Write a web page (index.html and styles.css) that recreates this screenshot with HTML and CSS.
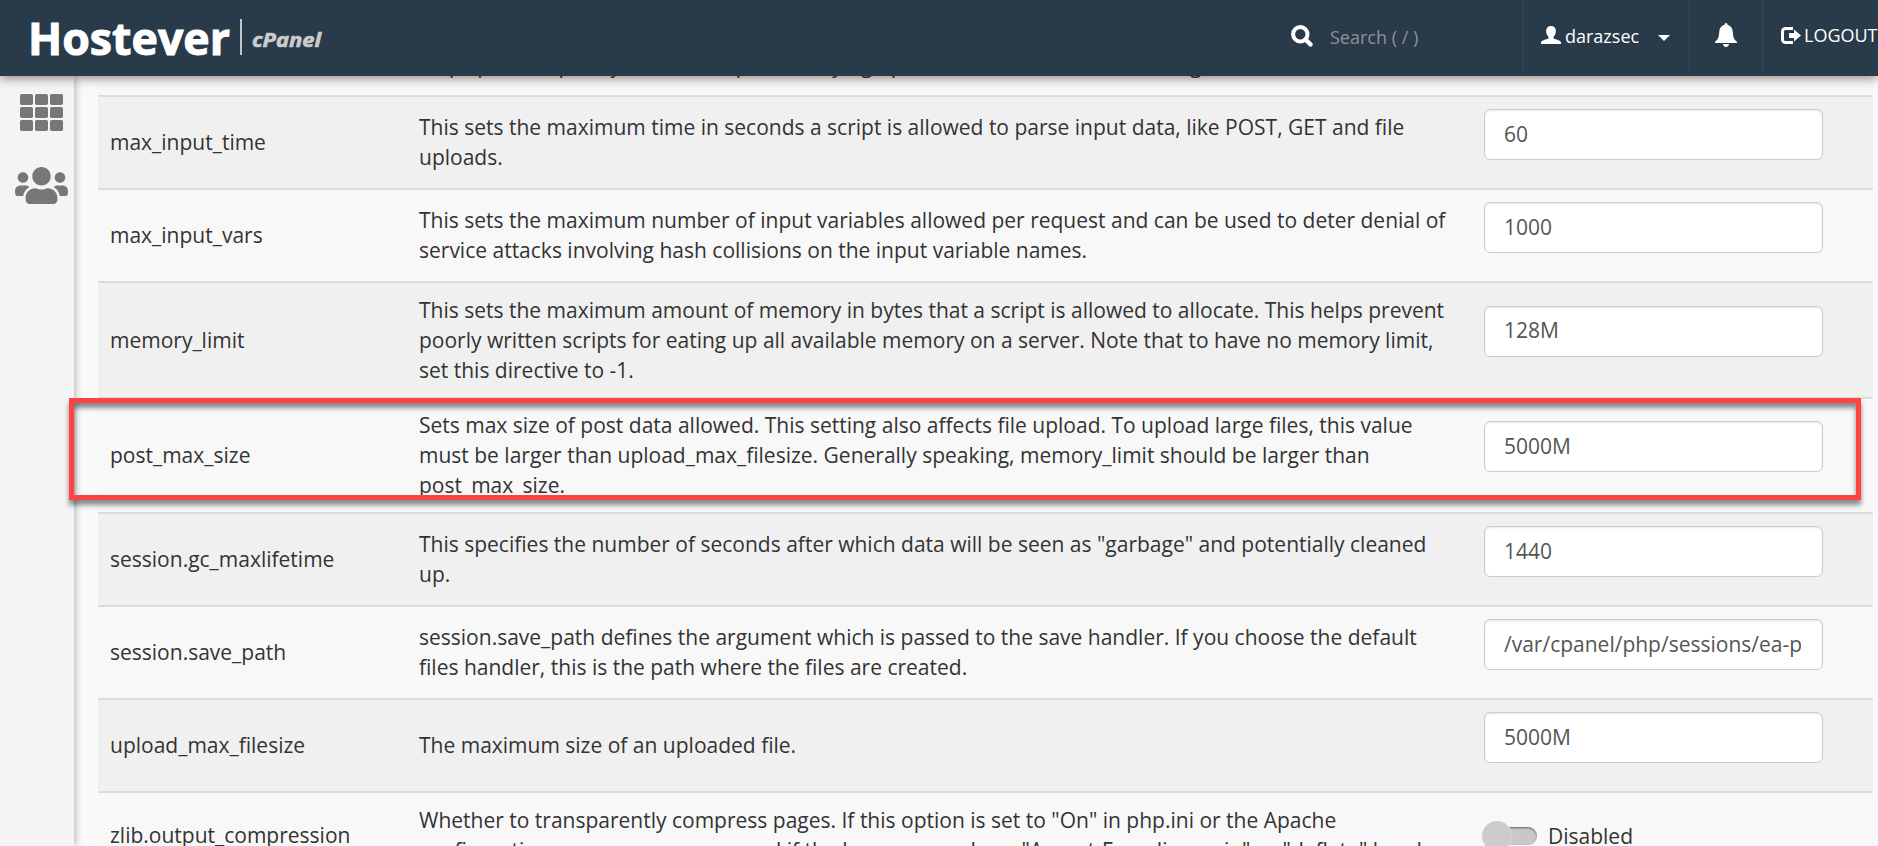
FILE: index.html
```
<!DOCTYPE html>
<html lang="en">

<head>
    <meta charset="UTF-8" />
    <title>cPanel - MultiPHP INI Editor</title>
    <link rel="stylesheet" href="styles.css">
</head>

<body>

    <header class="navbar">
        <div class="brand">
            <svg class="logo" width="210" height="50" viewBox="0 0 210 50">
                <text class="logo-name" x="-2" y="43" textLength="202" lengthAdjust="spacingAndGlyphs">Hostever</text>
            </svg>
            <span class="logo-divider"></span>
            <svg class="logo-sub" width="76" height="32" viewBox="0 0 76 32">
                <text class="logo-cpanel" x="0" y="22" textLength="69" lengthAdjust="spacingAndGlyphs">cPanel</text>
            </svg>
        </div>
        <div class="search">
            <svg width="22" height="22" viewBox="0 0 22 22">
                <circle cx="9.300" cy="9.300" r="7.200" fill="none" stroke="#fff" stroke-width="4" />
                <path d="M14.500 14.500l5 5" stroke="#fff" stroke-width="4.400" stroke-linecap="round" />
            </svg>
            <span>Search ( / )</span>
        </div>
        <div class="nav-item user">
            <svg width="20" height="18" viewBox="0 0 20 18">
                <path fill="#fff" d="M10 0c3.2 0 4.9 2.1 4.9 5 0 2.600-1 4.400-2.300 5.600v1.900c2.500 1.100 6.400 1.700 7.400 3.500V18H0v-2c1-1.800 4.900-2.400 7.400-3.500v-1.900C6.100 9.400 5.100 7.600 5.100 5 5.100 2.100 6.800 0 10 0z" />
            </svg>
            <span>darazsec</span>
            <i class="caret"></i>
        </div>
        <div class="nav-item bell">
            <svg width="22" height="24" viewBox="0 0 22 24">
                <path fill="#fff" d="M11 0c.9 0 1.500.7 1.500 1.800 3.300.8 5 3.400 5.300 7.200.3 5.500 1.200 7.500 4.200 9.800V20H0v-1.200C3 16.500 3.900 14.500 4.200 9c.3-3.800 2-6.400 5.300-7.200C9.500.7 10.100 0 11 0zM8 21h6c-.3 1.800-1.400 3-3 3s-2.700-1.200-3-3z" />
            </svg>
        </div>
        <div class="nav-item logout">
            <svg width="20" height="17" viewBox="0 0 20 17">
                <path d="M12 1.500H4.500a3 3 0 0 0-3 3v8a3 3 0 0 0 3 3H12" fill="none" stroke="#fff" stroke-width="3" />
                <path fill="#fff" d="M8 6h5V2.500l7 6-7 6V11H8z" />
            </svg>
            <span>LOGOUT</span>
        </div>
    </header>

    <div class="layout">
        <nav class="sidebar">
            <svg width="43" height="37" viewBox="0 0 43 37" fill="#777">
                <rect width="13" height="11" rx="1.800" /><rect x="15" width="13" height="11" rx="1.800" /><rect x="30" width="13" height="11" rx="1.800" />
                <rect y="13" width="13" height="11" rx="1.800" /><rect x="15" y="13" width="13" height="11" rx="1.800" /><rect x="30" y="13" width="13" height="11" rx="1.800" />
                <rect y="26" width="13" height="11" rx="1.800" /><rect x="15" y="26" width="13" height="11" rx="1.800" /><rect x="30" y="26" width="13" height="11" rx="1.800" />
            </svg>
            <svg width="53" height="37" viewBox="0 0 640 448" fill="#777">
                <path d="M96 192c35.300 0 64-28.700 64-64s-28.700-64-64-64-64 28.700-64 64 28.700 64 64 64zm448 0c35.300 0 64-28.700 64-64s-28.700-64-64-64-64 28.700-64 64 28.700 64 64 64zm32 32h-64c-17.600 0-33.500 7.100-45.100 18.600 40.300 22.100 68.900 62 75.100 109.400h66c17.700 0 32-14.300 32-32v-32c0-35.300-28.700-64-64-64zm-256 0c61.900 0 112-50.100 112-112S381.900 0 320 0 208 50.100 208 112s50.100 112 112 112zm76.800 32h-8.300c-20.800 10-43.900 16-68.500 16s-47.600-6-68.500-16h-8.300C179.600 256 128 307.600 128 371.200V400c0 26.500 21.500 48 48 48h288c26.500 0 48-21.500 48-48v-28.800c0-63.600-51.600-115.200-115.200-115.200zm-223.700-13.400C161.500 231.100 145.600 224 128 224H64c-35.300 0-64 28.700-64 64v32c0 17.700 14.300 32 32 32h65.900c6.300-47.400 34.900-87.300 75.200-109.400z" />
            </svg>
        </nav>

        <main class="content">
            <div class="directives">
                <div class="row row-first">
                    <div class="name"></div>
                    <div class="info">helps prevent poorly written scripts from tying up the server. The default setting is 30.</div>
                    <div class="value"></div>
                </div>
                <div class="row odd">
                    <div class="name">max_input_time</div>
                    <div class="info">This sets the maximum time in seconds a script is allowed to parse input data, like POST, GET and file<br>uploads.</div>
                    <div class="value"><input type="text" value="60" /></div>
                </div>
                <div class="row">
                    <div class="name">max_input_vars</div>
                    <div class="info">This sets the maximum number of input variables allowed per request and can be used to deter denial of<br>service attacks involving hash collisions on the input variable names.</div>
                    <div class="value"><input type="text" value="1000" /></div>
                </div>
                <div class="row odd tall">
                    <div class="name">memory_limit</div>
                    <div class="info">This sets the maximum amount of memory in bytes that a script is allowed to allocate. This helps prevent<br>poorly written scripts for eating up all available memory on a server. Note that to have no memory limit,<br>set this directive to -1.</div>
                    <div class="value"><input type="text" value="128M" /></div>
                </div>
                <div class="row tall">
                    <div class="name">post_max_size</div>
                    <div class="info">Sets max size of post data allowed. This setting also affects file upload. To upload large files, this value<br>must be larger than upload_max_filesize. Generally speaking, memory_limit should be larger than<br>post_max_size.</div>
                    <div class="value"><input type="text" value="5000M" /></div>
                </div>
                <div class="row odd">
                    <div class="name">session.gc_maxlifetime</div>
                    <div class="info">This specifies the number of seconds after which data will be seen as "garbage" and potentially cleaned<br>up.</div>
                    <div class="value"><input type="text" value="1440" /></div>
                </div>
                <div class="row">
                    <div class="name">session.save_path</div>
                    <div class="info">session.save_path defines the argument which is passed to the save handler. If you choose the default<br>files handler, this is the path where the files are created.</div>
                    <div class="value"><input type="text" value="/var/cpanel/php/sessions/ea-php74" /></div>
                </div>
                <div class="row odd">
                    <div class="name">upload_max_filesize</div>
                    <div class="info">The maximum size of an uploaded file.</div>
                    <div class="value"><input type="text" value="5000M" /></div>
                </div>
                <div class="row row-last">
                    <div class="name">zlib.output_compression</div>
                    <div class="info">Whether to transparently compress pages. If this option is set to "On" in php.ini or the Apache<br>configuration, pages are compressed if the browser sends an "Accept-Encoding: gzip" or "deflate" header.</div>
                    <div class="value toggle"><span class="switch"></span><span>Disabled</span></div>
                </div>
            </div>
        </main>
    </div>

    <div class="highlight"></div>

</body>

</html>
```

FILE: styles.css
```
* {
    box-sizing: border-box;
}

body {
    margin: 0;
    height: 846px;
    overflow: hidden;
    display: flex;
    flex-direction: column;
    background: #fafafa;
    color: #333;
    font-family: "Open Sans", sans-serif;
    font-size: 21px;
    line-height: 30px;
}

/* top bar */
.navbar {
    position: relative;
    z-index: 2;
    flex: none;
    display: flex;
    height: 76px;
    background: #293a4a;
    box-shadow: 0 2px 10px rgba(40, 10, 10, 0.5);
    color: #fff;
}

.brand {
    display: flex;
    width: 1291px;
    padding-left: 30px;
}

.logo {
    margin-top: 12px;
    overflow: visible;
}

.logo-name {
    fill: #fff;
    stroke: #fff;
    stroke-width: 1px;
    font: 700 45px "Open Sans", sans-serif;
}

.logo-divider {
    width: 2px;
    height: 36px;
    margin: 19px 10px 0 0;
    background: #c0c5ca;
}

.logo-sub {
    margin-top: 25px;
    overflow: visible;
}

.logo-cpanel {
    fill: #ccc;
    stroke: #ccc;
    stroke-width: 0.6px;
    font: italic 700 19px "Open Sans", sans-serif;
}

.search {
    display: flex;
    gap: 17px;
    width: 232px;
    padding-top: 22px;
    color: #8f9194;
    font-size: 18px;
}

.search svg {
    margin-top: 3px;
}

.nav-item {
    display: flex;
    height: 74px;
    border-left: 1px solid #33475a;
    font-size: 18px;
    white-space: nowrap;
}

.user {
    width: 166px;
    padding: 21px 0 0 17px;
}

.user svg {
    margin: 5px 4px 0 0;
}

.caret {
    margin: 14px 0 0 19px;
    width: 12px;
    height: 6px;
    border: 6px solid transparent;
    border-top-color: #fff;
    border-bottom: 0;
}

.bell {
    width: 73px;
    padding: 23px 0 0 25px;
}

.logout {
    padding: 20px 0 0 18px;
}

.logout svg {
    margin: 7px 3px 0 0;
}

/* page */
.layout {
    display: flex;
    flex: 1;
    min-height: 0;
}

.sidebar {
    z-index: 1;
    display: flex;
    flex-direction: column;
    align-items: center;
    gap: 36px;
    width: 74px;
    padding: 18px 0 0 8px;
    background: #f4f4f4;
    box-shadow: 1px 0 8px rgba(0, 0, 0, 0.3);
}

.content {
    flex: 1;
    padding: 0 5px 0 24px;
}

.row {
    display: grid;
    grid-template-columns: 309px 1077px 1fr;
    height: 93px;
    border-top: 2px solid #dcdcdc;
    background: #f8f8f8;
    align-items: center;
    white-space: nowrap;
}

.odd {
    background: #f0f0f0;
}

.tall {
    height: 115px;
}

.odd.tall {
    height: 116px;
}

/* scrolled under the top bar */
.row-first {
    height: 19px;
    border: 0;
    align-items: start;
}

.row-first .info {
    margin-top: -26px;
}

.row-last {
    height: 88px;
}

.name,
.info {
    padding: 0 0 2px 12px;
}

.odd.tall .name,
.odd.tall .info {
    padding-bottom: 0;
}

.value input {
    display: block;
    width: 339px;
    height: 51px;
    margin-bottom: 16px;
    padding: 0 21px 2px 19px;
    border: 1px solid #ccc;
    border-radius: 6px;
    background: #fff;
    box-shadow: inset 0 1px 2px rgba(0, 0, 0, 0.1);
    color: #555;
    font: inherit;
}

.tall .value input {
    margin-bottom: 18px;
}

.toggle {
    display: flex;
    align-items: center;
    gap: 11px;
}

.switch {
    position: relative;
    width: 53px;
    height: 18px;
    border-radius: 9px;
    background: #c8c8c8;
    box-shadow: inset 0 1px 2px rgba(0, 0, 0, 0.5);
}

.switch::before {
    content: '';
    position: absolute;
    left: -2px;
    top: -6px;
    width: 30px;
    height: 30px;
    border-radius: 50%;
    background: #ccc;
    box-shadow: 0 0 1px #fff;
}

/* marker around post_max_size */
.highlight {
    position: absolute;
    z-index: 3;
    left: 69px;
    top: 398px;
    width: 1792px;
    height: 102px;
    border: 5px solid #ff4343;
    box-shadow: 0 5px 5px rgba(0, 0, 0, 0.45), inset 0 5px 5px rgba(0, 0, 0, 0.45);
}
```
